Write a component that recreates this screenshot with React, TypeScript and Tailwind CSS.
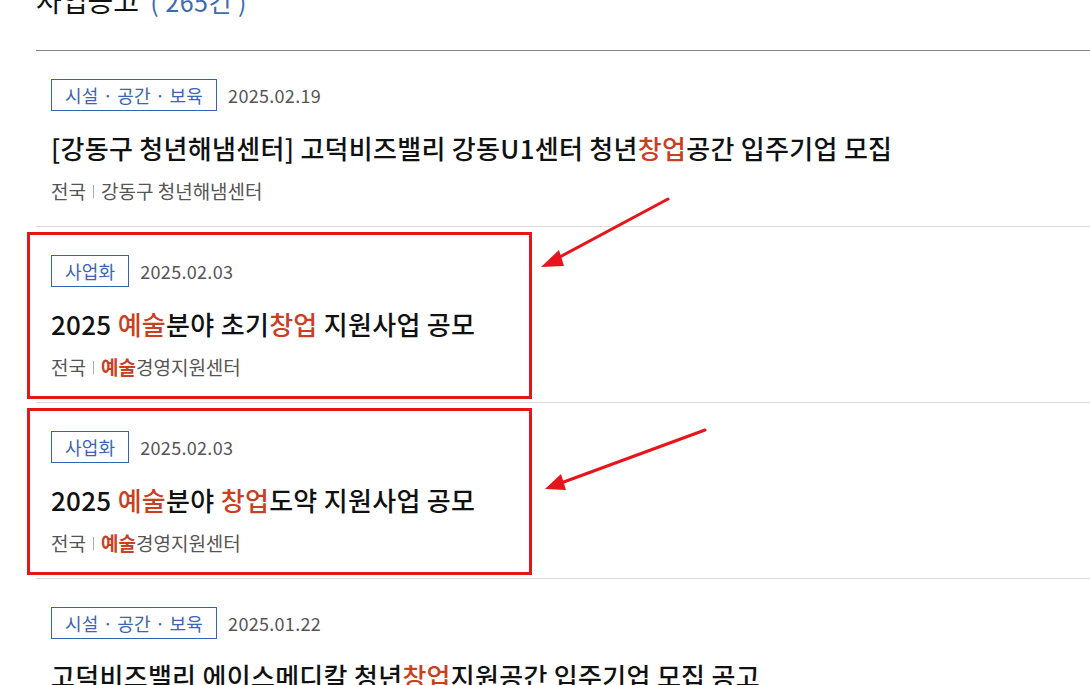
import React from "react";

type Part = { t: string; hl?: boolean };

type Notice = {
  tag: string;
  date: string;
  title: Part[];
  region: string;
  org: Part[];
};

const notices: Notice[] = [
  {
    tag: "시설 · 공간 · 보육",
    date: "2025.02.19",
    title: [
      { t: "[강동구 청년해냄센터] 고덕비즈밸리 강동U1센터 청년" },
      { t: "창업", hl: true },
      { t: "공간 입주기업 모집" },
    ],
    region: "전국",
    org: [{ t: "강동구 청년해냄센터" }],
  },
  {
    tag: "사업화",
    date: "2025.02.03",
    title: [
      { t: "2025 " },
      { t: "예술", hl: true },
      { t: "분야 초기" },
      { t: "창업", hl: true },
      { t: " 지원사업 공모" },
    ],
    region: "전국",
    org: [{ t: "예술", hl: true }, { t: "경영지원센터" }],
  },
  {
    tag: "사업화",
    date: "2025.02.03",
    title: [
      { t: "2025 " },
      { t: "예술", hl: true },
      { t: "분야 " },
      { t: "창업", hl: true },
      { t: "도약 지원사업 공모" },
    ],
    region: "전국",
    org: [{ t: "예술", hl: true }, { t: "경영지원센터" }],
  },
  {
    tag: "시설 · 공간 · 보육",
    date: "2025.01.22",
    title: [
      { t: "고덕비즈밸리 에이스메디칼 청년" },
      { t: "창업", hl: true },
      { t: "지원공간 입주기업 모집 공고" },
    ],
    region: "전국",
    org: [{ t: "강동구 청년해냄센터" }],
  },
];

const NoticeRow = ({ n }: { n: Notice }) => (
  <li className="h-[176px] border-b border-[#dddddd] pl-[15px] pt-[28px]">
    <div className="flex items-center">
      <span className="h-[32px] px-[13px] border border-[#3a60b0] text-[18px] tracking-[0.2px] text-[#3d64b8] flex items-center">
        {n.tag}
      </span>
      <span className="ml-[11px] text-[18px] tracking-[0.3px] text-[#555555]">{n.date}</span>
    </div>
    <p className="mt-[19px] text-[26px] leading-[36px] tracking-[0.3px] font-medium text-[#111111] whitespace-nowrap">
      {n.title.map((p, i) => (
        <span key={i} className={p.hl ? "text-[#c8401f]" : ""}>
          {p.t}
        </span>
      ))}
    </p>
    <div className="mt-[13px] flex items-center text-[19px] leading-[24px] text-[#555555]">
      <span>{n.region}</span>
      <span className="w-px h-[13px] bg-[#aaaaaa] mx-[7px]" />
      {n.org.map((p, i) => (
        <span key={i} className={p.hl ? "text-[#c8401f] font-bold" : ""}>
          {p.t}
        </span>
      ))}
    </div>
  </li>
);

export default function App() {
  return (
    <div className="relative w-[1090px] h-[685px] overflow-hidden bg-white font-['Noto_Sans_CJK_KR',sans-serif]">
      <div className="pl-[36px]">
        <h2 className="-mt-[14px] h-[39px] text-[28px] leading-[28px] text-[#111111] whitespace-nowrap">
          사업공고 <span className="ml-[5px] text-[#3d6cb0] text-[25px] tracking-[0.5px]">( 265건 )</span>
        </h2>
        <ul className="mt-[25px] border-t border-[#888888]">
          {notices.map((n, i) => (
            <NoticeRow key={i} n={n} />
          ))}
        </ul>
      </div>

      {/* annotation boxes */}
      <div className="absolute left-[27px] top-[232px] w-[505px] h-[167px] border-[3px] border-[#e8141b]" />
      <div className="absolute left-[27px] top-[408px] w-[505px] h-[167px] border-[3px] border-[#e8141b]" />

      <svg className="absolute inset-0" width="1090" height="685">
        <line x1="668" y1="199" x2="556" y2="259" stroke="#e8141b" strokeWidth="3" strokeLinecap="round" />
        <polygon points="541,267 559,250 564,266" fill="#e8141b" />
        <line x1="705" y1="430" x2="561" y2="483" stroke="#e8141b" strokeWidth="3" strokeLinecap="round" />
        <polygon points="545,489 561,474 566,490" fill="#e8141b" />
      </svg>
    </div>
  );
}
